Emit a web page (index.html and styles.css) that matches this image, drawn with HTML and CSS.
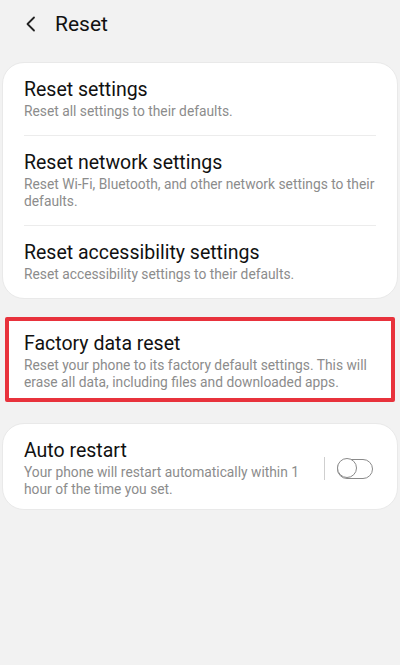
FILE: index.html
```html
<!DOCTYPE html>
<html lang="en">
<head>
    <meta charset="UTF-8">
    <meta name="viewport" content="width=device-width, initial-scale=1.0">
    <title>Reset</title>
    <link rel="stylesheet" href="styles.css">
</head>
<body>
    <header class="top-bar">
        <button class="back-btn" aria-label="Back">
            <svg width="12" height="16" viewBox="0 0 12 16">
                <path d="M9 1.5 L2.5 8 L9 14.5" fill="none" stroke="#222" stroke-width="1.8" stroke-linecap="round" stroke-linejoin="round"/>
            </svg>
        </button>
        <h1>Reset</h1>
    </header>

    <section class="card">
        <div class="item">
            <p class="title">Reset settings</p>
            <p class="sub">Reset all settings to their defaults.</p>
        </div>
        <div class="item">
            <p class="title">Reset network settings</p>
            <p class="sub">Reset Wi-Fi, Bluetooth, and other network settings to their defaults.</p>
        </div>
        <div class="item">
            <p class="title">Reset accessibility settings</p>
            <p class="sub">Reset accessibility settings to their defaults.</p>
        </div>
    </section>

    <section class="card highlight">
        <div class="item">
            <p class="title">Factory data reset</p>
            <p class="sub">Reset your phone to its factory default settings. This will erase all data, including files and downloaded apps.</p>
        </div>
    </section>

    <section class="card last-card">
        <div class="item switch-item">
            <div class="text">
                <p class="title">Auto restart</p>
                <p class="sub">Your phone will restart automatically within 1 hour of the time you set.</p>
            </div>
            <span class="sep"></span>
            <span class="toggle"><span class="knob"></span></span>
        </div>
    </section>
</body>
</html>
```

FILE: styles.css
```css
* {
    margin: 0;
    padding: 0;
    box-sizing: border-box;
}

body {
    background-color: #f2f2f2;
    font-family: Roboto, "Noto Sans", sans-serif;
    color: #111;
}

.top-bar {
    height: 48px;
    display: flex;
    align-items: center;
    padding-left: 25px;
}

.back-btn {
    border: none;
    background: none;
    display: flex;
    align-items: center;
    width: 30px;
}

.top-bar h1 {
    font-size: 21px;
    font-weight: 400;
}

.card {
    background-color: #fff;
    margin: 14px 2px 0;
    border: 1px solid #e9e9e9;
    border-radius: 22px;
    padding: 0 21px;
}

.item {
    padding: 15px 0;
    border-bottom: 1px solid #ececec;
}

.item:last-child {
    border-bottom: none;
}

.title {
    font-size: 19.5px;
    line-height: 24px;
}

.sub {
    font-size: 13.8px;
    line-height: 17px;
    color: #8c8c8c;
    margin-top: 1px;
}

.highlight {
    margin: 18px 5px 0;
    border: 4px solid #e8323c;
    border-radius: 2px;
    padding: 0 15px;
}

.highlight .item {
    padding: 11px 0 7px;
}

.last-card {
    margin-top: 21px;
}

.switch-item {
    display: flex;
    align-items: center;
    padding: 15px 0 11px;
}

.switch-item .text {
    flex: 1;
}

.sep {
    width: 1px;
    height: 23px;
    background-color: #cfcfcf;
    margin: 0 12px 0 10px;
}

.toggle {
    width: 36px;
    height: 20px;
    border: 1.5px solid #8a8a8a;
    border-radius: 10px;
    margin-right: 3px;
    display: flex;
}

.knob {
    width: 20px;
    height: 20px;
    margin: -1.5px;
    border: 1.5px solid #8a8a8a;
    border-radius: 50%;
    background-color: #fff;
}
```
